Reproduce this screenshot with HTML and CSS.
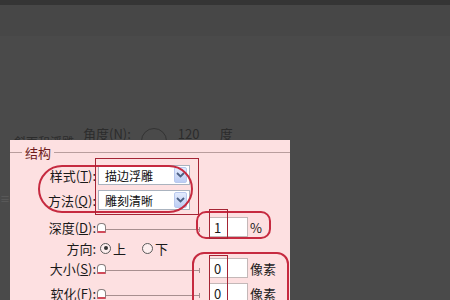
FILE: index.html
```html
<!DOCTYPE html>
<html lang="zh-CN">
<head>
    <meta charset="UTF-8">
    <meta name="viewport" content="width=device-width, initial-scale=1.0">
    <title>斜面和浮雕</title>
    <link rel="stylesheet" href="styles.css">
</head>
<body>
    <div class="top-bar"></div>
    <div class="top-band"></div>
    <div class="backdrop"></div>

    <div class="behind-row">
        <span class="behind-title"><span class="behind-title-text">斜面和浮雕</span></span>
        <span class="behind-label">角度(<u>N</u>):</span>
        <span class="behind-dial"></span>
        <span class="behind-value">120</span>
        <span class="behind-unit">度</span>
    </div>

    <div class="stage">
        <div class="gutter"><span class="grip">≡</span></div>

        <div class="dialog">
            <div class="group-head">
                <span class="group-line short"></span>
                <span class="group-title">结构</span>
                <span class="group-line"></span>
            </div>

            <div class="row row-style">
                <span class="label">样式(<u>T</u>):</span>
                <div class="select">
                    <span class="select-text">描边浮雕</span>
                    <span class="select-btn">
                        <svg width="9" height="6" viewBox="0 0 9 6"><path d="M1 1 L4.5 4.5 L8 1" fill="none" stroke="#4d6185" stroke-width="1.8"/></svg>
                    </span>
                </div>
            </div>

            <div class="row row-method">
                <span class="label">方法(<u>Q</u>):</span>
                <div class="select">
                    <span class="select-text">雕刻清晰</span>
                    <span class="select-btn">
                        <svg width="9" height="6" viewBox="0 0 9 6"><path d="M1 1 L4.5 4.5 L8 1" fill="none" stroke="#4d6185" stroke-width="1.8"/></svg>
                    </span>
                </div>
            </div>

            <div class="row row-depth">
                <span class="label">深度(<u>D</u>):</span>
                <div class="slider">
                    <span class="thumb"></span>
                    <span class="track"></span>
                    <span class="tick"></span>
                </div>
                <span class="field">1</span>
                <span class="unit">%</span>
            </div>

            <div class="row row-dir">
                <span class="label">方向:</span>
                <span class="radio checked"></span>
                <span class="radio-text">上</span>
                <span class="radio"></span>
                <span class="radio-text">下</span>
            </div>

            <div class="row row-size">
                <span class="label">大小(<u>S</u>):</span>
                <div class="slider">
                    <span class="thumb"></span>
                    <span class="track"></span>
                    <span class="tick"></span>
                </div>
                <span class="field">0</span>
                <span class="unit">像素</span>
            </div>

            <div class="row row-soft">
                <span class="label">软化(<u>F</u>):</span>
                <div class="slider">
                    <span class="thumb"></span>
                    <span class="track"></span>
                    <span class="tick"></span>
                </div>
                <span class="field">0</span>
                <span class="unit">像素</span>
            </div>

            <!-- red annotation marks drawn over the dialog -->
            <span class="mark oval-select"></span>
            <span class="mark box-select"></span>
            <span class="mark oval-depth"></span>
            <span class="mark box-depth"></span>
            <span class="mark oval-size"></span>
            <span class="mark box-size"></span>
        </div>
    </div>
</body>
</html>
```

FILE: styles.css
```css
* {
    box-sizing: border-box;
}
body {
    margin: 0;
    width: 450px;
    height: 300px;
    overflow: hidden;
    background-color: #4a4a4a;
    font-family: "Noto Sans CJK SC", "Liberation Sans", sans-serif;
    font-size: 13px;
    color: #1a1a1a;
}
u {
    text-decoration: underline;
    text-underline-offset: 1px;
}
.top-bar {
    height: 5px;
    background-color: #353535;
}
.top-band {
    height: 31px;
    background-color: #474747;
}
.backdrop {
    height: 91px;
}
.behind-row {
    height: 13px;
    display: flex;
    align-items: flex-start;
    overflow: hidden;
    color: #2c2c2c;
    line-height: 13px;
}
.behind-title {
    display: block;
    width: 69px;
    height: 4px;
    margin: 9px 0 0 14px;
    overflow: hidden;
    font-size: 12px;
}
.behind-title-text {
    display: block;
    line-height: 12px;
}
.behind-label {
    margin-top: 0;
}
.behind-dial {
    width: 26px;
    height: 26px;
    margin: 1px 0 0 10px;
    border: 1px solid #333;
    border-radius: 50%;
}
.behind-value {
    margin-left: 11px;
    width: 42px;
}
.stage {
    display: flex;
    height: 160px;
}
.gutter {
    width: 10px;
}
.grip {
    display: block;
    margin-top: 54px;
    font-size: 10px;
    line-height: 10px;
    color: #5c5c5c;
}
.dialog {
    position: relative;
    width: 280px;
    height: 170px;
    background-color: #fde0e1;
}
.group-head {
    display: flex;
    align-items: center;
    height: 15px;
    margin: 5px 0;
}
.group-line {
    flex: 1;
    height: 1px;
    background-color: #b99d9d;
}
.group-line.short {
    flex: none;
    width: 12px;
}
.group-title {
    padding: 0 3px;
    line-height: 15px;
    color: #6e1c1c;
}
.row {
    display: flex;
    align-items: center;
    line-height: 15px;
}
.label {
    width: 86px;
    margin-right: 1px;
    text-align: right;
    white-space: nowrap;
}
.row-style {
    height: 20px;
}
.row-method {
    height: 20px;
    margin-top: 5px;
}
.row-depth {
    height: 22px;
    margin-top: 6px;
}
.row-dir {
    height: 18px;
    margin-top: 1px;
}
.row-size {
    height: 22px;
}
.row-soft {
    height: 22px;
    margin-top: 3px;
}
.select {
    display: flex;
    align-items: center;
    width: 92px;
    height: 20px;
    margin-left: 1px;
    padding: 1px 2px 1px 6px;
    border: 1px solid #aab3bf;
    background-color: #fff;
    font-size: 12px;
}
.select-text {
    flex: 1;
    color: #111;
}
.select-btn {
    display: flex;
    align-items: center;
    justify-content: center;
    width: 13px;
    height: 16px;
    border: 1px solid #b9c9ee;
    border-radius: 2px;
    background: linear-gradient(#e3ebfd, #bccdf4);
}
.slider {
    display: flex;
    align-items: flex-end;
    width: 103px;
    height: 11px;
}
.thumb {
    width: 9px;
    height: 10px;
    border: 1px solid #8a8080;
    border-bottom: 2px solid #d24a5a;
    border-radius: 4px 4px 1px 1px;
    background-color: #fff;
}
.track {
    flex: 1;
    height: 1px;
    margin-bottom: 3px;
    background-color: #a88f8f;
}
.tick {
    width: 1px;
    height: 5px;
    margin-bottom: 1px;
    background-color: #a88f8f;
}
.field {
    width: 39px;
    height: 20px;
    margin-left: 9px;
    padding: 2px 0 0 4px;
    border: 1px solid #c4b8b8;
    background-color: #fff;
    line-height: 15px;
}
.unit {
    margin-left: 2px;
}
.radio {
    width: 11px;
    height: 11px;
    margin-left: 3px;
    border: 1px solid #5a5a5a;
    border-radius: 50%;
    background-color: #fdeeee;
    display: flex;
    align-items: center;
    justify-content: center;
}
.radio.checked::after {
    content: "";
    width: 4px;
    height: 4px;
    border-radius: 50%;
    background-color: #333;
}
.radio-text {
    margin-left: 2px;
    margin-right: 13px;
}
.mark {
    position: absolute;
    pointer-events: none;
}
.oval-select {
    left: 28px;
    top: 25px;
    width: 155px;
    height: 48px;
    border: 2px solid #c62a40;
    border-radius: 24px;
}
.box-select {
    left: 85px;
    top: 18px;
    width: 104px;
    height: 57px;
    border: 1px solid #a52434;
}
.oval-depth {
    left: 186px;
    top: 71px;
    width: 75px;
    height: 28px;
    border: 2px solid #c62a40;
    border-radius: 10px;
}
.box-depth {
    left: 199px;
    top: 69px;
    width: 19px;
    height: 30px;
    border: 1px solid #a52434;
}
.oval-size {
    left: 182px;
    top: 112px;
    width: 97px;
    height: 60px;
    border: 2px solid #c62a40;
    border-radius: 12px;
}
.box-size {
    left: 199px;
    top: 115px;
    width: 19px;
    height: 50px;
    border: 1px solid #a52434;
}
```
